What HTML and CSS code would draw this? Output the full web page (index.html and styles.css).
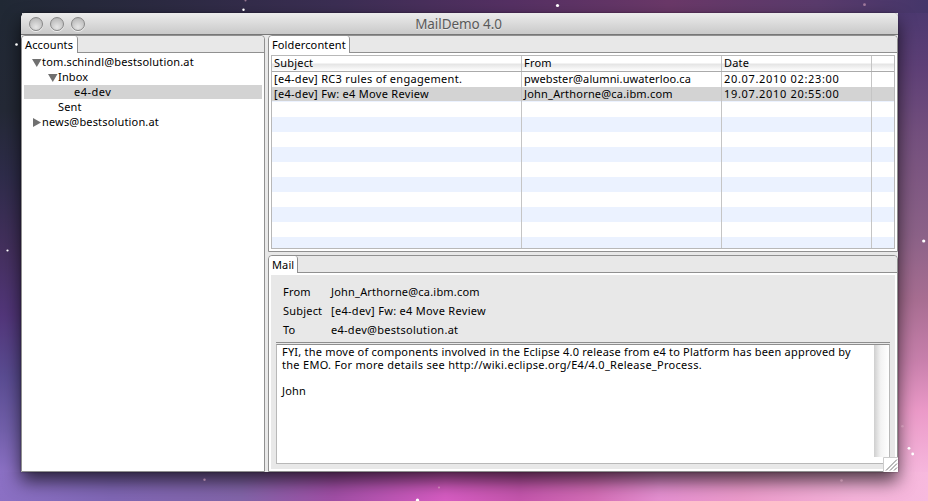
FILE: index.html
```html
<!DOCTYPE html>
<html lang="en">
<head>
<meta charset="utf-8">
<title>MailDemo 4.0</title>
<link rel="stylesheet" href="styles.css">
</head>
<body>
<main class="window">
  <header class="titlebar">
    <div class="lights"><i></i><i></i><i></i></div>
    <h1>MailDemo 4.0</h1>
  </header>
  <div class="content">
    <section class="part accounts">
      <div class="tabs"><div class="tab">Accounts</div></div>
      <ul class="tree">
        <li class="lv1"><svg width="10" height="8"><path d="M0 0h9.500L4.750 8z"/></svg><span>tom.schindl@bestsolution.at</span></li>
        <li class="lv2"><svg width="10" height="8"><path d="M0 0h9.500L4.750 8z"/></svg><span>Inbox</span></li>
        <li class="lv3 selected"><span>e4-dev</span></li>
        <li class="lv2 leaf"><span>Sent</span></li>
        <li class="lv1"><svg width="10" height="9"><path d="M1 0v9L9 4.500z"/></svg><span>news@bestsolution.at</span></li>
      </ul>
    </section>
    <div class="right">
      <section class="part folder">
        <div class="tabs"><div class="tab">Foldercontent</div></div>
        <div class="table">
          <div class="row head"><b>Subject</b><b>From</b><b>Date</b><b></b></div>
          <div class="row"><span class="subject">[e4-dev] RC3 rules of engagement.</span><span class="sender">pwebster@alumni.uwaterloo.ca</span><span class="date">20.07.2010 02:23:00</span><span></span></div>
          <div class="row selected"><span class="subject">[e4-dev] Fw: e4 Move Review</span><span>John_Arthorne@ca.ibm.com</span><span class="date">19.07.2010 20:55:00</span><span></span></div>
          <div class="row empty"><span></span><span></span><span></span><span></span></div>
        </div>
      </section>
      <section class="part mail">
        <div class="tabs"><div class="tab">Mail</div></div>
        <div class="mailbody">
          <dl>
            <dt>From</dt><dd>John_Arthorne@ca.ibm.com</dd>
            <dt>Subject</dt><dd class="subject">[e4-dev] Fw: e4 Move Review</dd>
            <dt>To</dt><dd class="to">e4-dev@bestsolution.at</dd>
          </dl>
          <div class="rule"></div>
          <div class="message">
            <div class="text">
              <div class="one">FYI, the move of components involved in the Eclipse 4.0 release from e4 to Platform has been approved by</div>
              <div class="two">the EMO. For more details see http://wiki.eclipse.org/E4/4.0_Release_Process.</div>
              <div class="signature">John</div>
            </div>
            <div class="scroll"></div>
          </div>
        </div>
      </section>
    </div>
  </div>
  <svg class="grip" width="15" height="15" viewBox="0 0 15 15"><path d="M0 0h15v15H0z" fill="#fff"/><path d="M.5 15V.5H15" fill="none" stroke="#ccc"/><path d="M3 13.500l11-11M7 13.500l7-7M11 13.500l3-3" stroke="#777" fill="none"/></svg>
</main>
<svg class="stars" width="928" height="501" viewBox="0 0 928 501" aria-hidden="true">
  <g fill="#fff">
    <circle cx="557.500" cy="5.500" r="1.600"/><circle cx="243.500" cy="9.800" r="1.200"/>
    <circle cx="16.500" cy="44.500" r="1.300"/><circle cx="7.500" cy="250.500" r="1.100"/>
    <circle cx="923.700" cy="241" r="1.600"/><circle cx="909" cy="448.300" r="1.400"/>
    <circle cx="912.700" cy="454" r="1.400"/><circle cx="417.500" cy="500.300" r="1.700"/>
  </g>
  <g fill="#d5a5bd" opacity=".6">
    <circle cx="864.500" cy="4.700" r="1.400"/><circle cx="245.500" cy=".5" r="1"/><circle cx="204.500" cy="479.800" r="1.200"/>
    <circle cx="841.500" cy="480.500" r="1.300"/><circle cx="902.500" cy="426.300" r="1.300"/><circle cx="439" cy="487.500" r="1.100"/>
  </g>
</svg>
</body>
</html>
```

FILE: styles.css
```css
* { box-sizing: border-box; }
body {
  margin: 0; padding: 13px 30px 29px 21px; width: 928px; height: 501px; overflow: hidden;
  font: 11px/15px "Noto Sans", sans-serif; letter-spacing: .2px; color: #000;
  background:
    linear-gradient(90deg, #202834, #2c2a42 18%, #3b2e53 36%, #553063 55%, #6a3868 72%, #5a3b6c 88%, #45366a) 0 0 / 928px 13px no-repeat,
    linear-gradient(90deg, #8b70c4, #7f66b4 12%, #8264a8 26%, #a04ea5 36%, #d65cc2 48%, #c455ac 56%, #d36db6 64%, #e48fd0 71%, #eb9aca 80%, #f4b2d9 92%, #f7b9dd) 0 472px / 928px 29px no-repeat,
    linear-gradient(#202834, #242936 22%, #2e2c4a 35%, #44305e 50%, #52367a 63%, #5a4c92 75%, #7260ab 86%, #8b70c4 94%) 0 0 / 22px 501px no-repeat,
    linear-gradient(#48376e, #5d3f76 13%, #74507e 27%, #8c6288 47%, #a86e92 60%, #c880ac 72%, #eb9ac8 82%, #f6b6dc 94%) 898px 0 / 30px 501px no-repeat;
}
.stars { position: absolute; left: 0; top: 0; }
.window { position: relative; width: 877px; height: 459px; border-radius: 5px 5px 0 0; background: #e8e8e8; box-shadow: 0 9px 18px rgba(0,0,0,.68), 0 0 2px rgba(0,0,0,.5); display: flex; flex-direction: column; }
.titlebar { position: relative; height: 22px; flex: none; border-bottom: 1px solid #777; border-radius: 5px 5px 0 0; background: linear-gradient(#ececec, #dedede 40%, #c9c9c9); display: flex; justify-content: center; }
h1 { margin: 0; padding-right: 2px; font: 13.500px/22px "Noto Sans", sans-serif; letter-spacing: -.08px; color: #5a5a5a; text-shadow: 0 1px #e8e8e8; }
.lights { position: absolute; left: 8px; top: 4px; display: flex; gap: 7px; }
.lights i { width: 14px; height: 14px; border-radius: 50%; border: 1px solid #888; background: radial-gradient(circle at 50% 75%, #e6e6e6, #bcbcbc 75%, #999); box-shadow: 0 1px #eee; }
.content { flex: 1; display: flex; gap: 3px; }
.part { border: 1px solid #909090; background: #fff; border-radius: 4px 4px 0 0; }
.accounts { width: 244px; }
.right { flex: 1; display: flex; flex-direction: column; gap: 3px; }
.folder { height: 217px; }
.mail { flex: 1; display: flex; flex-direction: column; }
.tabs { height: 17px; border-bottom: 1px solid #909090; background: #e8e8e8; border-radius: 4px 4px 0 0; display: flex; flex: none; }
.tab { height: 17px; padding: 0 3px; background: #fff; border-right: 1px solid #909090; border-radius: 4px 3px 0 0; line-height: 17px; letter-spacing: .12px; }
.accounts .tab { padding-right: 4px; }
.tree { list-style: none; margin: 0; padding: 2px 2px 0; }
.tree li { height: 15px; display: flex; align-items: center; line-height: 13px; letter-spacing: .16px; }
.tree span { height: 15px; }
.tree svg { fill: #707070; }
.lv1 { padding-left: 8px; }
.lv2 { padding-left: 24px; }
.tree .leaf { padding-left: 34px; }
.tree .lv3 { padding-left: 50px; height: 14px; margin-bottom: 1px; letter-spacing: .5px; }
.selected { background: #d3d3d3; }
.table { margin: 2px; height: 194px; border: 1px solid #b8b8b8; display: flex; flex-direction: column; }
.row { display: grid; grid-template-columns: 250px 200px 150px 1fr; height: 15px; line-height: 13px; }
.row > * { border-right: 1px solid #c5c5c5; padding-left: 2px; font-weight: 400; white-space: nowrap; }
.row > :last-child { border: 0; }
.head { height: 16px; border-bottom: 1px solid #aaa; background: linear-gradient(#fff 0 45%, #e5e5e5 55%, #fff); }
.row.selected { height: 14px; }
.empty { flex: 1; height: auto; background: repeating-linear-gradient(#fff 0 15px, #ebf2ff 15px 30px) 0 1px; }
.subject { letter-spacing: .3px; }
.sender { letter-spacing: .12px; }
.date { letter-spacing: .67px; }
.to { letter-spacing: .27px; }
.mailbody { flex: 1; margin: 2px; background: #e8e8e8; padding: 7px 5px 5px; display: flex; flex-direction: column; }
dl { margin: 0; padding-left: 7px; display: grid; grid-template-columns: 48px 1fr; grid-auto-rows: 19px; line-height: 19px; height: 60px; flex: none; }
dd { margin: 0; }
.rule { height: 2px; border-top: 1px solid #8e8e8e; flex: none; }
.message { flex: 1; background: #fff; border: 1px solid #b8b8b8; border-top-color: #8e8e8e; display: flex; justify-content: space-between; }
.text { margin-left: 5px; line-height: 13px; white-space: nowrap; }
.one { letter-spacing: .21px; }
.two { letter-spacing: .29px; }
.signature { margin-top: 13px; }
.scroll { width: 15px; margin-bottom: 6px; background: linear-gradient(90deg, #cfcfcf, #f3f3f3 45%, #fff); }
.grip { position: absolute; right: 0; bottom: 0; }
```
